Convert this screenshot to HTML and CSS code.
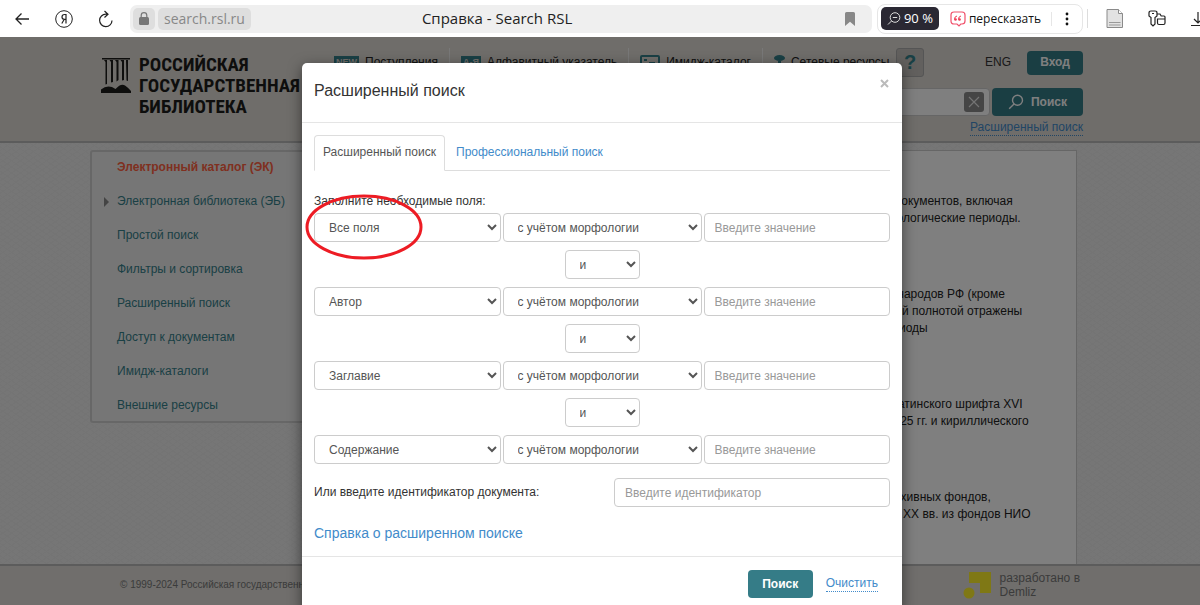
FILE: index.html
```html
<!DOCTYPE html>
<html lang="ru">
<head>
  <meta charset="UTF-8">
  <meta name="viewport" content="width=device-width, initial-scale=1.0">
  <title>Справка - Search RSL</title>
  <link rel="stylesheet" href="styles.css">
</head>
<body>
  <!-- Панель браузера -->
  <div class="toolbar">
    <div class="nav-buttons">
      <button class="icon-btn" aria-label="Назад">
        <svg width="16" height="16" viewBox="0 0 16 16"><path d="M15 8H2M7.500 2.500L2 8l5.500 5.500" fill="none" stroke="#222" stroke-width="1.300"/></svg>
      </button>
      <button class="icon-btn" aria-label="Яндекс">
        <svg width="18" height="18" viewBox="0 0 18 18" fill="none" stroke="#222"><circle cx="9" cy="9" r="8.300"/><path d="M11 13.500v-9H9.500C7.800 4.500 7 5.600 7 6.900s.8 2.400 2.400 2.400H11M9.300 9.300l-2.500 4.200" stroke-width="1.200"/></svg>
      </button>
      <button class="icon-btn" aria-label="Обновить">
        <svg width="16" height="18" viewBox="0 0 16 18" fill="none" stroke="#222" stroke-width="1.200"><path d="M9.500 4.200H7.800a6.200 6.200 0 1 0 6.200 6.300M6.500 1l3.500 3.200-3.500 3.300"/></svg>
      </button>
    </div>
    <div class="address">
      <button class="lock" aria-label="Защищено">
        <svg width="10" height="13" viewBox="0 0 10 13"><rect y="5" width="10" height="8" rx="1.500" fill="#777"/><path d="M2.200 6V3.500a2.800 2.800 0 0 1 5.600 0V6" fill="none" stroke="#777" stroke-width="1.200"/></svg>
      </button>
      <span class="host">search.rsl.ru</span>
      <span class="page-title">Справка - Search RSL</span>
      <button class="icon-btn" aria-label="Закладка">
        <svg width="10" height="14" viewBox="0 0 10 14"><path d="M0 1.500Q0 0 1.500 0h7Q10 0 10 1.500V14L5 9.800 0 14z" fill="#888"/></svg>
      </button>
    </div>
    <div class="tools">
      <button class="zoom">
        <svg width="14" height="13" viewBox="0 0 14 13" fill="none" stroke="#ddd"><circle cx="8" cy="5.500" r="4.800"/><path d="M5.800 5.500h4.400M4.500 9L1 12.500"/></svg>
        90 %
      </button>
      <button class="retell">
        <svg width="16" height="16" viewBox="0 0 16 16"><path d="M4 1h8q3 0 3 3v6q0 3-3 3h-1.200L9 15l-2-2H4q-3 0-3-3V4q0-3 3-3z" fill="none" stroke="#f0506a" stroke-width="1.200"/><path d="M7 5Q4.500 5.300 4.500 8.500M11 5Q8.500 5.300 8.500 8.500" fill="none" stroke="#f03c55"/><circle cx="5.500" cy="8.500" r="1.300" fill="#f03c55"/><circle cx="9.500" cy="8.500" r="1.300" fill="#f03c55"/></svg>
        пересказать
      </button>
      <button class="more" aria-label="Ещё">
        <svg width="4" height="14" viewBox="0 0 4 14" fill="#111"><circle cx="2" cy="2" r="1.400"/><circle cx="2" cy="7" r="1.400"/><circle cx="2" cy="12" r="1.400"/></svg>
      </button>
    </div>
    <div class="extensions">
      <button class="icon-btn" aria-label="Документ">
        <svg width="18" height="19" viewBox="0 0 18 19"><path d="M1 .5h11.500l4 4v14H1z" fill="#e2e2e2" stroke="#8a8a8a"/><path d="M12.500.5v4h4" fill="#fff" stroke="#8a8a8a"/><path d="M3 13.500h11.500M3 16h11.500" stroke="#999"/></svg>
      </button>
      <button class="icon-btn" aria-label="Пароли">
        <svg width="18" height="18" viewBox="0 0 18 18" fill="none" stroke="#222" stroke-width="1.200"><path d="M9 4.500V3q0-2-2-2H3Q1 1 1 3v3l2 1.500V14l2 2 2-2V7.500L9 6zM4 3.500h2"/><path d="M9 4h3l1.200 2H16q1 0 1 1v6q0 1.500-1.500 1.500H11q-1.500 0-1.500-1.500V9H17"/></svg>
      </button>
      <button class="icon-btn" aria-label="Загрузки">
        <svg width="16" height="16" viewBox="0 0 16 16" fill="none" stroke="#222" stroke-width="1.200"><path d="M8 1v11M4 8l4 4 4-4M1 14.500h14"/></svg>
      </button>
    </div>
  </div>

  <div class="site">
    <header class="header">
      <a class="logo" href="#">
        <svg width="30" height="36" viewBox="0 0 30 36" fill="#1c1c1a"><path d="M1 0h28v1.500H1zM3 2h3v24l-1.500.5V4zM8.500 2h3.500v22l-2 .5V4zM14 2h3.500v20l-2 1.500V4zM19.500 2H23v20l-2 .5V4zM25 2h2v21l-1.500-.5z"/><path d="M0 35v-3.500Q7 26 14.500 31 20 25 24 27.500q3 2 6 5.500V35z"/></svg>
        <span class="logo-text">РОССИЙСКАЯ<br>ГОСУДАРСТВЕННАЯ<br>БИБЛИОТЕКА</span>
      </a>
      <div class="header-right">
        <div class="top-row">
          <nav class="top-menu">
            <a href="#"><span class="badge">NEW</span>Поступления</a>
            <a href="#"><span class="badge">А-Я</span>Алфавитный указатель</a>
            <a href="#"><svg width="20" height="15" viewBox="0 0 20 15"><rect x="1" y="1" width="18" height="13" rx="1" fill="none" stroke="#35808a" stroke-width="2"/><path d="M4 5h3M9 8h6" stroke="#35808a" stroke-width="2"/></svg>Имидж-каталог</a>
            <a href="#"><svg width="11" height="15" viewBox="0 0 11 15" fill="#35808a"><ellipse cx="5.500" cy="3" rx="5.500" ry="3"/><path d="M4 6h3v9H4z"/></svg>Сетевые ресурсы</a>
          </nav>
          <button class="help">?</button>
          <a class="lang" href="#">ENG</a>
          <button class="teal login">Вход</button>
        </div>
        <form class="search-row">
          <div class="search-box">
            <input type="text" aria-label="Поиск по каталогу">
            <button type="button" class="clear" aria-label="Стереть"><svg width="12" height="12" viewBox="0 0 12 12"><path d="M1 1l10 10M11 1L1 11" stroke="#e8e8e8" stroke-width="1.200"/></svg></button>
          </div>
          <button type="button" class="teal find">
            <svg width="16" height="16" viewBox="0 0 16 16" fill="none" stroke="#fff" stroke-width="1.400"><circle cx="9.500" cy="6.200" r="5"/><path d="M6 10l-4.800 4.800"/></svg>
            Поиск
          </button>
        </form>
        <a class="dashed" href="#">Расширенный поиск</a>
      </div>
    </header>

    <main class="main">
      <ul class="side-menu">
        <li class="current"><a href="#">Электронный каталог (ЭК)</a></li>
        <li class="has-children"><a href="#">Электронная библиотека (ЭБ)</a></li>
        <li><a href="#">Простой поиск</a></li>
        <li><a href="#">Фильтры и сортировка</a></li>
        <li><a href="#">Расширенный поиск</a></li>
        <li><a href="#">Доступ к документам</a></li>
        <li><a href="#">Имидж-каталоги</a></li>
        <li><a href="#">Внешние ресурсы</a></li>
      </ul>
      <article class="content">
        <p>издания всех видов документов, включая<br>охватывает все хронологические периоды.</p>
        <p>изданные на языках народов РФ (кроме<br>издания с наибольшей полнотой отражены<br>хронологические периоды</p>
        <p>коллекция издания латинского шрифта XVI<br>с середины века – 1825 гг. и кириллического</p>
        <p>научные описания архивных фондов,<br>рукописи конца XIX – XX вв. из фондов НИО</p>
      </article>
    </main>

    <footer class="footer">
      <span class="copyright">© 1999-2024 Российская государственная библиотека</span>
      <a class="dev" href="#">
        <svg width="29" height="29" viewBox="0 0 29 29" fill="#fff02a"><path d="M6 1h22v21H17V12H6z"/><circle cx="6" cy="22" r="5.500"/></svg>
        <span>разработано в<br>Demliz</span>
      </a>
    </footer>

    <!-- Окно расширенного поиска -->
    <div class="backdrop">
      <div class="modal" role="dialog" aria-labelledby="modalTitle">
        <div class="modal-header">
          <h4 id="modalTitle">Расширенный поиск</h4>
          <button class="close" aria-label="Закрыть"><svg width="9" height="9" viewBox="0 0 9 9"><path d="M1 1l7 7M8 1L1 8" stroke="#bbb" stroke-width="2"/></svg></button>
        </div>
        <form class="modal-body">
          <div class="tabs">
            <a class="tab active" href="#">Расширенный поиск</a>
            <a class="tab" href="#">Профессиональный поиск</a>
          </div>
          <p class="hint">Заполните необходимые поля:</p>
          <div class="rows">
            <div class="row">
              <select aria-label="Поле 1"><option>Все поля</option></select>
              <select aria-label="Морфология 1"><option>с учётом морфологии</option></select>
              <input type="text" aria-label="Значение 1" placeholder="Введите значение">
            </div>
            <select class="operator" aria-label="Оператор 1"><option>и</option></select>
            <div class="row">
              <select aria-label="Поле 2"><option>Автор</option></select>
              <select aria-label="Морфология 2"><option>с учётом морфологии</option></select>
              <input type="text" aria-label="Значение 2" placeholder="Введите значение">
            </div>
            <select class="operator" aria-label="Оператор 2"><option>и</option></select>
            <div class="row">
              <select aria-label="Поле 3"><option>Заглавие</option></select>
              <select aria-label="Морфология 3"><option>с учётом морфологии</option></select>
              <input type="text" aria-label="Значение 3" placeholder="Введите значение">
            </div>
            <select class="operator" aria-label="Оператор 3"><option>и</option></select>
            <div class="row">
              <select aria-label="Поле 4"><option>Содержание</option></select>
              <select aria-label="Морфология 4"><option>с учётом морфологии</option></select>
              <input type="text" aria-label="Значение 4" placeholder="Введите значение">
            </div>
          </div>
          <div class="id-row">
            <label for="docId">Или введите идентификатор документа:</label>
            <input type="text" id="docId" placeholder="Введите идентификатор">
          </div>
          <a class="help-link" href="#">Справка о расширенном поиске</a>
        </form>
        <div class="modal-footer">
          <button class="teal submit">Поиск</button>
          <a class="dashed" href="#">Очистить</a>
        </div>
        <svg class="marker" width="118" height="66" viewBox="0 0 118 66"><ellipse cx="59" cy="33" rx="57" ry="31" fill="none" stroke="#ed1c24" stroke-width="3"/></svg>
      </div>
    </div>
  </div>
</body>
</html>
```

FILE: styles.css
```css
* { box-sizing: border-box; }
body {
  margin: 0;
  height: 100vh;
  display: flex;
  flex-direction: column;
  overflow: hidden;
  font-family: "Liberation Sans", Arial, sans-serif;
  font-size: 12px;
  line-height: 17px;
  color: #333;
}
a { text-decoration: none; color: #428bca; }
button, input, select { font: inherit; }
button { border: none; padding: 0; cursor: pointer; }
svg { display: block; flex: none; }

/* Панель браузера */
.toolbar {
  display: flex;
  align-items: center;
  height: 37px;
  flex: none;
  background: #fff;
  overflow: hidden;
  font-family: "Open Sans", "Noto Sans", sans-serif;
}
.icon-btn { background: none; flex: none; }
.nav-buttons {
  display: flex;
  align-items: center;
  gap: 25px;
  padding: 0 16px 0 14px;
}
.address {
  display: flex;
  align-items: center;
  gap: 3px;
  flex: 1;
  height: 28px;
  padding: 0 17px 0 3px;
  background: #efefef;
  border-radius: 7px;
}
.lock, .host {
  display: flex;
  align-items: center;
  height: 22px;
  padding: 0 6px;
  background: #dedede;
  border-radius: 5px;
}
.host { font-size: 14px; color: #888; }
.page-title { flex: 1; padding-left: 168px; font-size: 15px; color: #222; }
.tools {
  display: flex;
  align-items: center;
  height: 30px;
  margin-left: 5px;
  padding: 0 13px 0 3px;
  border: 1px solid #e6e6e6;
  border-radius: 8px;
}
.zoom {
  display: flex;
  align-items: center;
  gap: 3px;
  height: 23px;
  padding: 0 6px;
  background: #2a2833;
  color: #fff;
  border-radius: 5px;
  font-size: 13px;
}
.retell {
  display: flex;
  align-items: center;
  gap: 3px;
  padding: 0 10px 0 11px;
  background: none;
  color: #111;
  font-size: 12px;
}
.more {
  padding: 0 0 0 13px;
  background: none;
  border-left: 1px solid #e6e6e6;
}
.extensions {
  display: flex;
  align-items: center;
  gap: 24px;
  width: 113px;
  margin-left: 4px;
  padding-left: 18px;
  border-left: 1px solid #ddd;
}

/* Сайт */
.site {
  position: relative;
  flex: 1;
  min-height: 0;
  display: flex;
  flex-direction: column;
  background-color: #ececec;
  background-image:
    repeating-linear-gradient(35deg, #e9e9e9 0 1px, transparent 1px 5px),
    repeating-linear-gradient(-35deg, #e9e9e9 0 1px, transparent 1px 5px);
}
.header {
  display: flex;
  gap: 34px;
  height: 106px;
  flex: none;
  padding: 11px 117px 0 101px;
  background: #dedad5;
  border-bottom: 2px solid #b8b8b8;
}
.logo { display: flex; gap: 8px; padding-top: 10px; }
.logo-text {
  margin-top: -4px;
  width: 161px;
  font-family: "Roboto Condensed", "Open Sans Condensed", Lato, sans-serif;
  font-size: 19px;
  font-weight: bold;
  line-height: 21px;
  white-space: nowrap;
  color: #1c1c1a;
}
.header-right { flex: 1; min-width: 0; text-align: right; }
.top-row { display: flex; align-items: center; height: 29px; }
.top-menu { display: flex; flex: 1; min-width: 0; }
.top-menu a {
  display: flex;
  align-items: center;
  gap: 6px;
  height: 29px;
  padding: 0 11px;
  border-left: 1px solid #f0f0f0;
  color: #222;
  white-space: nowrap;
}
.top-menu a:first-child { padding-left: 0; border-left: none; }
.badge {
  padding: 0 2px;
  background: #35808a;
  color: #dedad5;
  font-size: 9px;
  font-weight: bold;
  line-height: 13px;
}
.help {
  width: 28px;
  height: 29px;
  flex: none;
  background: #c4c0bc;
  border: 1px solid #aaa;
  border-radius: 3px;
  color: #35808a;
  font-size: 20px;
  font-weight: bold;
}
.lang { padding: 0 16px 0 61px; color: #333; }
.teal {
  display: flex;
  align-items: center;
  justify-content: center;
  gap: 7px;
  height: 28px;
  background: #357c87;
  color: #fff;
  font-weight: bold;
  border-radius: 4px;
}
.login { width: 56px; height: 24px; flex: none; }
.search-row { display: flex; gap: 2px; margin-top: 11px; }
.search-box {
  display: flex;
  align-items: center;
  flex: 1;
  height: 28px;
  padding-right: 5px;
  background: #fff;
  border: 1px solid #ccc;
  border-radius: 4px;
}
.search-box input { flex: 1; border: none; background: none; }
.clear {
  display: flex;
  align-items: center;
  justify-content: center;
  width: 20px;
  height: 20px;
  background: #8a8a8a;
  border-radius: 3px;
}
.find { width: 91px; }
.header-right .dashed { display: inline-block; margin-top: 4px; }
.dashed { border-bottom: 1px dotted #428bca; line-height: 15px; }

.main {
  display: flex;
  flex: 1;
  min-height: 0;
  padding: 7px 123px 0 90px;
}
.side-menu {
  width: 260px;
  height: 273px;
  margin: 0;
  padding: 0;
  list-style: none;
  background: #ececec;
  border: 2px solid #cfcfcf;
  border-radius: 3px;
}
.side-menu li { padding: 7px 0 10px 25px; }
.side-menu a { color: #35808a; }
.side-menu .current a { color: #ff6040; font-weight: bold; }
.has-children::before {
  content: "";
  float: left;
  margin: 4px 0 0 -13px;
  border: 5px solid transparent;
  border-left-color: #888;
  border-right: none;
}
.content {
  flex: 1;
  padding: 42px 0 0 430px;
  background: #fff;
  border: 1px solid #ccc;
  border-bottom: none;
  color: #222;
  white-space: nowrap;
}
.content p { margin: 0 0 59px; }

.footer {
  display: flex;
  justify-content: space-between;
  height: 41px;
  flex: none;
  padding: 5px 120px 0;
  background: #e0ddd8;
  border-top: 2px solid #b8b8b8;
  color: #777;
  font-size: 10px;
}
.copyright { padding-top: 5px; }
.dev { display: flex; gap: 8px; color: #777; font-size: 12px; line-height: 14px; }

/* Модальное окно */
.backdrop {
  position: absolute;
  inset: 0;
  padding: 26px 0 0 4px;
  background: rgba(0, 0, 0, 0.5);
}
.modal {
  position: relative;
  max-width: 600px;
  margin: 0 auto;
  background: #fff;
  border-radius: 5px;
  box-shadow: 0 4px 14px rgba(0, 0, 0, 0.5);
}
.modal-header {
  display: flex;
  justify-content: space-between;
  padding: 16px 13px 19px 12px;
  border-bottom: 1px solid #e5e5e5;
}
.modal-header h4 { margin: 0; font-size: 16px; font-weight: normal; line-height: 24px; }
.close { align-self: flex-start; background: none; }
.modal-body { padding: 12px 12px 13px; }
.tabs { display: flex; border-bottom: 1px solid #ddd; margin-bottom: 22px; }
.tab { padding: 9px 11px; }
.tab.active {
  margin-bottom: -1px;
  padding: 8px;
  border: 1px solid #ddd;
  border-bottom: 1px solid #fff;
  border-radius: 4px 4px 0 0;
  color: #555;
  background: #fff;
}
.hint { margin: 0 0 3px; }
.rows { display: flex; flex-direction: column; gap: 8px; }
.row { display: grid; grid-template-columns: 1fr 199px 1fr; gap: 2px; }
.modal select, .modal input {
  min-width: 0;
  height: 29px;
  padding: 0 10px;
  background-color: #fff;
  border: 1px solid #ccc;
  border-radius: 4px;
  color: #555;
}
.modal input::placeholder { color: #999; }
.modal .operator { width: 75px; align-self: center; }
.id-row {
  display: flex;
  align-items: center;
  justify-content: space-between;
  margin: 14px 0 18px;
}
.id-row input { width: 276px; }
.help-link { font-size: 14px; }
.modal-footer {
  display: flex;
  align-items: center;
  justify-content: flex-end;
  gap: 13px;
  padding: 13px 24px;
  border-top: 1px solid #e5e5e5;
}
.submit { width: 65px; }
/* Красный овал вокруг поля */
.marker {
  position: absolute;
  left: 3px;
  top: 131px;
  pointer-events: none;
}
```
